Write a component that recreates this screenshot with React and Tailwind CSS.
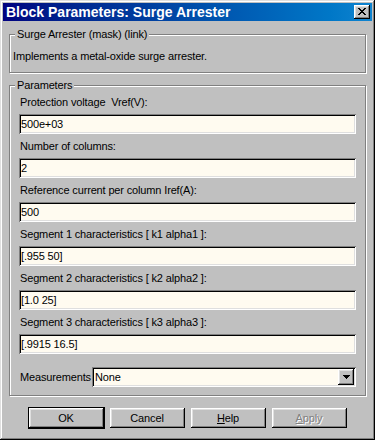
import React from 'react';

const bevelOut = 'shadow-[inset_-1px_-1px_0_#000,inset_1px_1px_0_#fff,inset_-2px_-2px_0_#808080,inset_2px_2px_0_#dfdfdf]';
const bevelIn = 'shadow-[inset_1px_1px_0_#808080,inset_-1px_-1px_0_#fff,inset_2px_2px_0_#000,inset_-2px_-2px_0_#dfdfdf]';
const etched = 'border border-[#808080] shadow-[inset_1px_1px_0_#fff,1px_1px_0_#fff]';

const fields = [
  { label: 'Protection voltage  Vref(V):', value: '500e+03' },
  { label: 'Number of columns:', value: '2' },
  { label: 'Reference current per column Iref(A):', value: '500' },
  { label: 'Segment 1 characteristics [ k1 alpha1 ]:', value: '[.955 50]' },
  { label: 'Segment 2 characteristics [ k2 alpha2 ]:', value: '[1.0 25]' },
  { label: 'Segment 3 characteristics [ k3 alpha3 ]:', value: '[.9915 16.5]' },
];

function CloseGlyph() {
  // 8x7 pixel cross, like the classic caption button
  const px = [
    [0, 0], [1, 0], [6, 0], [7, 0],
    [1, 1], [2, 1], [5, 1], [6, 1],
    [2, 2], [3, 2], [4, 2], [5, 2],
    [3, 3], [4, 3],
    [2, 4], [3, 4], [4, 4], [5, 4],
    [1, 5], [2, 5], [5, 5], [6, 5],
    [0, 6], [1, 6], [6, 6], [7, 6],
  ];
  return (
    <svg width="8" height="7" viewBox="0 0 8 7" shapeRendering="crispEdges">
      {px.map(([x, y]) => <rect key={`${x}-${y}`} x={x} y={y} width="1" height="1" fill="#000" />)}
    </svg>
  );
}

function Field({ label, value, first }) {
  return (
    <div className={`flex flex-col ${first ? '' : 'mt-[6px]'}`}>
      <div className="h-[13px] leading-[13px] pl-[1px] whitespace-pre">{label}</div>
      <div className={`mt-[5px] h-[20px] bg-[#fffbf0] pl-[2px] flex items-center leading-[13px] ${bevelIn}`}>
        {value}
      </div>
    </div>
  );
}

function Button({ children, isDefault, disabled }) {
  return (
    <div
      className={`w-[75px] h-[20px] flex items-center justify-center ${bevelOut} ${isDefault ? 'outline outline-1 outline-black' : ''} ${disabled ? 'text-[#808080] [text-shadow:1px_1px_0_#fff]' : ''}`}
    >
      {children}
    </div>
  );
}

export default function App() {
  return (
    <div className="w-[375px] h-[440px] bg-[#c0c0c0] p-[3px] flex flex-col text-black text-[11px] tracking-[-0.15px] font-['Liberation_Sans',Arial,sans-serif] shadow-[inset_-1px_-1px_0_#000,inset_1px_1px_0_#dfdfdf,inset_-2px_-2px_0_#808080,inset_2px_2px_0_#fff] overflow-hidden">
      {/* caption */}
      <div className="h-[18px] flex items-center justify-between pl-[3px] pr-[2px] bg-gradient-to-r from-[#000080] to-[#1084d0]">
        <span className="text-white font-bold text-[14px] tracking-normal leading-[18px]">Block Parameters: Surge Arrester</span>
        <div className={`w-[16px] h-[14px] bg-[#c0c0c0] flex items-center justify-center pb-[1px] ${bevelOut}`}>
          <CloseGlyph />
        </div>
      </div>

      {/* description group */}
      <div className={`relative mx-[6px] mt-[13px] h-[39px] ${etched} pl-[3px] pt-[15px]`}>
        <span className="absolute -top-[7px] left-[5px] px-[2px] bg-[#c0c0c0] leading-[13px]">Surge Arrester (mask) (link)</span>
        <div className="leading-[13px]">Implements a metal-oxide surge arrester.</div>
      </div>

      {/* parameters group */}
      <div className={`relative mx-[6px] mt-[12px] h-[311px] ${etched} px-[9px] pt-[10px] flex flex-col`}>
        <span className="absolute -top-[7px] left-[5px] px-[2px] bg-[#c0c0c0] leading-[13px]">Parameters</span>
        {fields.map((f, i) => <Field key={f.label} first={i === 0} {...f} />)}
        <div className="mt-[13px] flex items-center">
          <span className="w-[73px] pl-[1px]">Measurements</span>
          <div className={`flex-1 h-[20px] bg-[#fffbf0] flex items-center justify-between pl-[3px] pr-[2px] ${bevelIn}`}>
            <span className="leading-[13px]">None</span>
            <div className={`w-[16px] h-[16px] bg-[#c0c0c0] flex items-center justify-center ${bevelOut}`}>
              <svg width="7" height="4" viewBox="0 0 7 4" shapeRendering="crispEdges">
                <rect x="0" y="0" width="7" height="1" fill="#000" />
                <rect x="1" y="1" width="5" height="1" fill="#000" />
                <rect x="2" y="2" width="3" height="1" fill="#000" />
                <rect x="3" y="3" width="1" height="1" fill="#000" />
              </svg>
            </div>
          </div>
        </div>
      </div>

      {/* buttons */}
      <div className="mt-[12px] flex justify-center gap-[6px]">
        <Button isDefault>OK</Button>
        <Button>Cancel</Button>
        <Button><span><span className="underline">H</span>elp</span></Button>
        <Button disabled><span><span className="underline">A</span>pply</span></Button>
      </div>
    </div>
  );
}
